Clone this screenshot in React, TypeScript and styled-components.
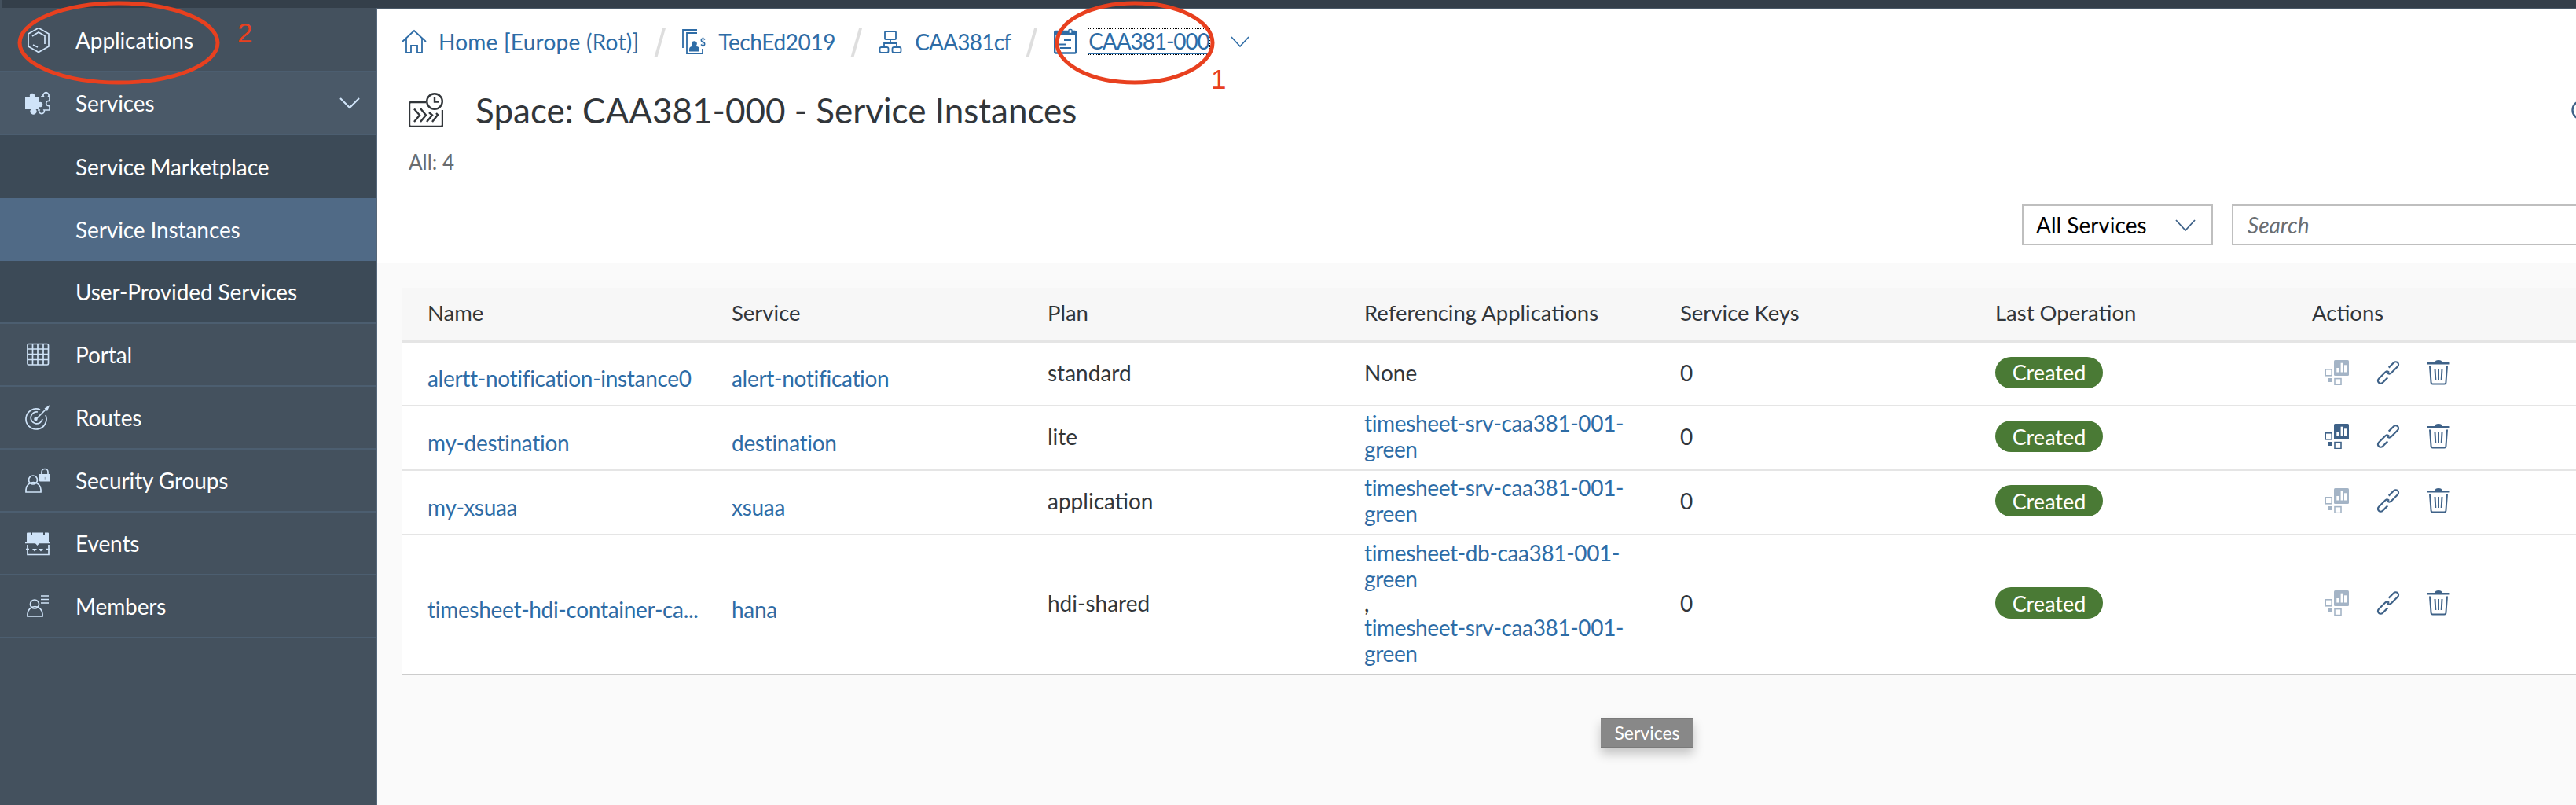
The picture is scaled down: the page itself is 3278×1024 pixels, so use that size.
import React from "react";
import styled, { createGlobalStyle } from "styled-components";

const FONT = `"Lato", "Liberation Sans", sans-serif`;
const LINK = "#2e6ca6";
const ICON = "#cfe3f8";
const ACTION = "#3f6288";
const RED = "#e8401f";

const Global = createGlobalStyle`
  html, body { margin: 0; padding: 0; background: #fafafa; }
  body { font-family: ${FONT}; }
  * { box-sizing: border-box; }
`;

const Page = styled.div`
  position: relative; width: 3278px; height: 1024px; overflow: hidden;
  display: flex; flex-direction: column; background: #fafafa;
`;
const TopBar = styled.div`
  height: 10px; flex: none; background: #343f4a; border-left: 2px solid #44515e;
`;
const Body = styled.div`display: flex; flex: 1; min-height: 0;`;

const Sidebar = styled.nav`
  width: 480px; flex: none; background: #44515e; border-right: 2px solid #55677a;
  display: flex; flex-direction: column;
`;
const NavRow = styled.div<{ $kind?: "first" | "open" | "sub" | "selected" }>`
  height: ${p => (p.$kind === "first" ? 82 : 80)}px;
  padding-top: ${p => (p.$kind === "first" ? 2 : 0)}px;
  flex: none; display: flex; align-items: center; padding-left: 32px; padding-right: 20px;
  color: #fff; font-size: 28px; letter-spacing: -0.1px;
  background: ${p =>
    p.$kind === "sub" ? "#3c4a57" : p.$kind === "selected" ? "#506a86" : p.$kind === "open" ? "#4a5968" : "#44515e"};
  border-bottom: ${p => (p.$kind === "sub" || p.$kind === "selected" ? "none" : "2px solid #4c5e70")};
`;
const LastSub = styled(NavRow)`height: 80px; border-bottom: 2px solid #4c5e70;`;
const NavIcon = styled.svg`
  width: 32px; height: 32px; flex: none; margin-right: 32px;
  fill: none; stroke: ${ICON}; stroke-width: 1.7;
`;
const NavIndent = styled.span`width: 64px; flex: none;`;
const NavChevron = styled.svg`
  width: 26px; height: 16px; margin-left: auto; fill: none; stroke: ${ICON}; stroke-width: 2.2;
`;

const Main = styled.main`
  flex: 1; min-width: 0; border-top: 2px solid #4a5968; display: flex; flex-direction: column;
`;
const Head = styled.header`background: #fff; padding: 0 0 22px 32px; flex: none; height: 322px;`;
const Crumbs = styled.div`
  margin-top: 21px; height: 40px; display: flex; align-items: center; font-size: 28px; color: ${LINK};
`;
const CrumbIcon = styled.svg`
  width: 30px; height: 32px; flex: none; margin-right: 16px;
  fill: none; stroke: ${LINK}; stroke-width: 1.8; overflow: visible;
`;
const Slash = styled.span`
  width: 4px; height: 37px; margin: 0 26px 0 25px; flex: none; background: #dedede; transform: skewX(-16deg);
`;
const Crumb = styled.span<{ $spacing?: number }>`
  white-space: nowrap; letter-spacing: ${p => p.$spacing ?? 0}px;
`;
const CurrentCrumb = styled(Crumb)`
  outline: 1px dotted #000; border-bottom: 2px solid ${LINK}; line-height: 29px; padding-top: 1px; margin-left: -2px;
`;
const CrumbChevron = styled.svg`
  width: 24px; height: 14px; margin-left: 27px; fill: none; stroke: ${LINK}; stroke-width: 1.6;
`;
const TitleRow = styled.div`
  margin-top: 37px; padding-left: 8px; height: 60px; display: flex; align-items: center;
`;
const TitleIcon = styled.svg`
  width: 44px; height: 44px; flex: none; margin-right: 41px;
  fill: none; stroke: #32363a; stroke-width: 2.4;
`;
const Title = styled.h1`
  margin: 0; font-size: 44px; font-weight: 400; color: #32363a; white-space: nowrap;
`;
const HelpIcon = styled.svg`
  width: 26px; height: 26px; flex: none; margin-left: auto; margin-right: -20px;
  fill: none; stroke: ${ACTION}; stroke-width: 2.4;
`;
const Count = styled.div`
  margin-top: 20px; padding-left: 8px; height: 32px; line-height: 32px; font-size: 26px; color: #6a6d70;
`;
const Filters = styled.div`
  margin-top: 38px; height: 52px; display: flex; gap: 24px; justify-content: flex-end; margin-right: -8px;
`;
const Select = styled.div`
  width: 243px; height: 52px; border: 2px solid #bfbfbf; background: #fff;
  display: flex; align-items: center; padding: 0 20px 0 16px; font-size: 28px; color: #000;
`;
const SelectChevron = styled.svg`
  width: 26px; height: 15px; margin-left: auto; fill: none; stroke: ${ACTION}; stroke-width: 1.8;
`;
const Search = styled.div`
  width: 446px; height: 52px; border: 2px solid #bfbfbf; background: #fff;
  display: flex; align-items: center; padding-left: 18px;
  font-size: 28px; font-style: italic; color: #6a6d70;
`;

const Content = styled.section`flex: 1; background: #fafafa; padding: 32px 0 0 32px;`;
const Table = styled.table`
  width: 2766px; table-layout: fixed; border-collapse: collapse; font-size: 28px; color: #32363a;
`;
const HeadCell = styled.th`
  height: 68px; padding: 0 0 4px 32px; text-align: left; font-weight: 400; font-size: 27.5px;
  background: #f7f7f7; border-bottom: 4px solid #e5e5e5; color: #32363a;
`;
const Row = styled.tr<{ $last?: boolean }>`
  background: #fff;
  border-bottom: 2px solid ${p => (p.$last ? "#cccccc" : "#e5e5e5")};
`;
const Cell = styled.td<{ $h?: number }>`
  height: ${p => p.$h ?? 82}px; padding: 0 0 4px 32px; white-space: nowrap; vertical-align: middle;
`;
const LinkCell = styled(Cell)`padding-top: 15px; color: ${LINK}; letter-spacing: -0.3px;`;
const RefLink = styled.span`
  display: block; line-height: 33px; color: ${LINK}; white-space: normal; letter-spacing: -0.35px;
`;
const Comma = styled.span`display: block; line-height: 29px; color: #32363a;`;
const Badge = styled.span`
  display: inline-flex; width: 137px; height: 40px; align-items: center; justify-content: center;
  border-radius: 20px; background: #4a7a35; color: #fff; font-size: 27px;
`;
const Actions = styled.div`display: flex; align-items: center; padding-left: 16px;`;
const ChartIcon = styled.svg<{ $off?: boolean }>`
  width: 32px; height: 32px; flex: none; opacity: ${p => (p.$off ? 0.47 : 1)};
`;
const ChainIcon = styled.svg`
  width: 28px; height: 28px; flex: none; margin-left: 35px; fill: none; stroke: ${ACTION}; stroke-width: 2.2;
  overflow: visible;
`;
const BinIcon = styled.svg`
  width: 30px; height: 32px; flex: none; margin-left: 35px;
`;

const Tooltip = styled.div`
  position: absolute; left: 2037px; top: 913px; width: 118px; height: 38px;
  background: #888; color: #fff; font-size: 23px; display: flex; align-items: center; justify-content: center;
  border-top: 1px solid #7a7a7a; border-bottom: 1px solid #7a7a7a;
  box-shadow: 0 8px 14px rgba(0,0,0,0.22);
`;
const Ring = styled.svg`
  position: absolute; fill: none; stroke: ${RED}; stroke-width: 5; overflow: visible;
`;
const MarkNumber = styled.span<{ $x: number }>`
  position: absolute; left: ${p => p.$x}px; top: 24px; font-family: "Liberation Sans", sans-serif;
  font-size: 35px; line-height: 1; color: ${RED};
`;
const MarkOne = styled(MarkNumber)`top: 83px;`;

const Chart = ({ off }: { off?: boolean }) => (
  <ChartIcon $off={off} viewBox="0 0 32 32">
    <rect x="12" y="0" width="19" height="20" rx="1.5" fill={ACTION} />
    <rect x="15.3" y="10" width="2.8" height="5.5" fill="#fff" />
    <rect x="20.6" y="3.7" width="2.6" height="11.8" fill="#fff" />
    <rect x="25" y="6.3" width="3" height="9.2" fill="#fff" />
    <rect x="1.2" y="11.8" width="8" height="8" fill="none" stroke={ACTION} strokeWidth="1.6" />
    <rect x="4" y="23" width="5.6" height="5" fill={ACTION} />
    <rect x="13" y="23.6" width="8" height="8" fill="none" stroke={ACTION} strokeWidth="1.6" />
  </ChartIcon>
);
const Chain = () => (
  <ChainIcon viewBox="0 0 28 28">
    <g transform="rotate(-45 14 14)">
      <path d="M9 18H0a3.500 3.500 0 0 1 0-7H12a3.500 3.500 0 0 1 3 3.500" />
      <path d="M19 10H28a3.500 3.500 0 0 1 0 7H16a3.500 3.500 0 0 1-3-3.500" />
    </g>
  </ChainIcon>
);
const Bin = () => (
  <BinIcon viewBox="0 0 30 32">
    <path d="M10.5 3a4.5 3 0 0 1 9 0z" fill={ACTION} />
    <rect x="0.5" y="3" width="29" height="2.6" rx="0.6" fill={ACTION} />
    <path d="M4 7.5 5.6 29a2 2 0 0 0 2 1.6h14.8a2 2 0 0 0 2-1.6L26 7.5M10.5 11l.8 14M15 11v14M19.5 11l-.8 14" fill="none" stroke={ACTION} strokeWidth="2" />
  </BinIcon>
);
const ActionSet = ({ off = true }: { off?: boolean }) => (
  <Actions><Chart off={off} /><Chain /><Bin /></Actions>
);

const App = () => (
  <Page>
    <Global />
    <TopBar />
    <Body>
      <Sidebar>
        <NavRow $kind="first">
          <NavIcon viewBox="0 0 32 32">
            <path d="M17 0.5 30 8V24L17 31.5 4 24V8z" />
            <path d="M9 11 17 6l8 4.5V21M10 22l6 3" />
          </NavIcon>
          Applications
        </NavRow>
        <NavRow $kind="open">
          <NavIcon viewBox="0 0 32 32">
            <path d="M0 8h6a3.2 3.2 0 1 1 6 0h6v7a3.2 3.2 0 1 1 0 6v3h-4.500a4 4 0 1 1-6 0H0z" fill={ICON} stroke="none" />
            <path d="M20 8h3.500a3.500 3.500 0 1 1 6 0H31v5.500a3.200 3.200 0 1 0 0 6V25h-7a3.300 3.300 0 1 1-6 0h-2" />
          </NavIcon>
          Services
          <NavChevron viewBox="0 0 26 16"><path d="M1 2 13 14 25 2" /></NavChevron>
        </NavRow>
        <NavRow $kind="sub"><NavIndent />Service Marketplace</NavRow>
        <NavRow $kind="selected"><NavIndent />Service Instances</NavRow>
        <LastSub $kind="sub"><NavIndent />User-Provided Services</LastSub>
        <NavRow>
          <NavIcon viewBox="0 0 32 32">
            <rect x="3" y="2.500" width="26.500" height="26.500" rx="1.500" />
            <path d="M3 9h26.500M3 15.500h26.500M3 22.500h26.500M9.500 2.500V29M16 2.500V29M23 2.500V29" />
          </NavIcon>
          Portal
        </NavRow>
        <NavRow>
          <NavIcon viewBox="0 0 32 32">
            <path d="M26 13a13 13 0 1 1-7-7M22 18a7.500 7.500 0 1 1-6-9" />
            <circle cx="13.500" cy="18" r="2.300" fill={ICON} stroke="none" />
            <path d="M14 18 27 5" />
            <path d="M24.500 4.500 31.500 0 28 8z" fill={ICON} stroke="none" />
          </NavIcon>
          Routes
        </NavRow>
        <NavRow>
          <NavIcon viewBox="0 0 32 32">
            <circle cx="10" cy="15.500" r="5.500" />
            <path d="M1 31v-3a9 9 0 0 1 19 0v3z" />
            <path d="M21 8V5.500a4 4 0 0 1 8 0V8" />
            <path d="M18 8h14v8.500a1 1 0 0 1-1 1H19a1 1 0 0 1-1-1z" fill={ICON} stroke="none" />
            <rect x="24" y="11" width="2.200" height="4.500" fill="#44515e" />
          </NavIcon>
          Security Groups
        </NavRow>
        <NavRow>
          <NavIcon viewBox="0 0 32 32">
            <path d="M3 2.500h26a1 1 0 0 1 1 1V14H2V3.500a1 1 0 0 1 1-1z" fill={ICON} stroke="none" />
            <path d="M8 0v5M24 0v5" stroke="#44515e" strokeWidth="2" />
            <path d="M0 15.500h31M3 18v12.500h27V18M1 23.500h4M27 23.500h5" />
            <path d="M11 14h9l-4.500 5zM9 23h6l-3 3.500zM17 23h6l-3 3.500z" fill={ICON} stroke="none" />
          </NavIcon>
          Events
        </NavRow>
        <NavRow>
          <NavIcon viewBox="0 0 32 32">
            <circle cx="12" cy="13.500" r="5.500" />
            <path d="M3 29v-3a9.500 9.500 0 0 1 19 0v3zM20 3h10M20 7.500h10M20 12h10" />
          </NavIcon>
          Members
        </NavRow>
      </Sidebar>
      <Main>
        <Head>
          <Crumbs>
            <CrumbIcon viewBox="0 0 30 32">
              <path d="M0 16 15 2l15 14M5 13v17h6v-9h8v9h6V13" />
            </CrumbIcon>
            <Crumb $spacing={0.25}>Home [Europe (Rot)]</Crumb>
            <Slash />
            <CrumbIcon viewBox="0 0 30 32">
              <path d="M1 24V1h18" />
              <path d="M26 25v6H6V5h13" />
              <circle cx="15.500" cy="18.500" r="3.300" fill={LINK} stroke="none" />
              <path d="M9 28.500v-2.500a4 4 0 0 1 4-4h5a4 4 0 0 1 4 4v2.500z" fill={LINK} stroke="none" />
              <path d="M29 13.500q-1-1.500-2.500-1.500c-3 0-3 4 0 4.500s3 4.500 0 4.500q-1.500 0-2.500-1.500M26.500 10.500v12" strokeWidth="1.400" />
            </CrumbIcon>
            <Crumb $spacing={-0.4}>TechEd2019</Crumb>
            <Slash />
            <CrumbIcon viewBox="0 0 30 32">
              <rect x="8" y="3" width="14" height="10" rx="1" />
              <rect x="1.500" y="23" width="11" height="7" rx="2" />
              <rect x="17.500" y="23" width="11" height="7" rx="2" />
              <path d="M15 13v5M7 23v-5h16v5" />
            </CrumbIcon>
            <Crumb $spacing={-0.8}>CAA381cf</Crumb>
            <Slash />
            <CrumbIcon viewBox="0 0 30 32">
              <rect x="1.200" y="3" width="27" height="27.500" rx="1.500" strokeWidth="2.400" />
              <rect x="1.200" y="2.500" width="27" height="5" fill={LINK} strokeWidth="1" />
              <rect x="19" y="0.500" width="4" height="5" rx="1" fill="#fff" strokeWidth="1.400" />
              <path d="M13 14h9M6 19.500h10M8 24h14" strokeWidth="2" />
            </CrumbIcon>
            <CurrentCrumb $spacing={-1.1}>CAA381-000</CurrentCrumb>
            <CrumbChevron viewBox="0 0 24 14"><path d="M1 1 12 13 23 1" /></CrumbChevron>
          </Crumbs>
          <TitleRow>
            <TitleIcon viewBox="0 0 44 44">
              <path d="M22 12H3a2 2 0 0 0-2 2v27a2 2 0 0 0 2 2h38a2 2 0 0 0 2-2V22" />
              <circle cx="33" cy="11" r="9.800" />
              <path d="M33 5v6.500h5.500" />
              <path d="M7 20.500l7 8-7 8.500M15 20l7 8.500-7 8.500M26 25l4 3.500-7 8.500M35 26l2 2-7 9" />
            </TitleIcon>
            <Title>Space: CAA381-000 - Service Instances</Title>
            <HelpIcon viewBox="0 0 26 26">
              <circle cx="13" cy="13" r="11.500" />
              <circle cx="13" cy="13" r="6" strokeWidth="1.600" />
            </HelpIcon>
          </TitleRow>
          <Count>All: 4</Count>
          <Filters>
            <Select>
              All Services
              <SelectChevron viewBox="0 0 26 15"><path d="M1 1 13 14 25 1" /></SelectChevron>
            </Select>
            <Search>Search</Search>
          </Filters>
        </Head>
        <Content>
          <Table>
            <colgroup>
              <col width="387" />
              <col width="402" />
              <col width="403" />
              <col width="402" />
              <col width="401" />
              <col width="403" />
              <col />
            </colgroup>
            <thead>
              <tr>
                <HeadCell>Name</HeadCell>
                <HeadCell>Service</HeadCell>
                <HeadCell>Plan</HeadCell>
                <HeadCell>Referencing Applications</HeadCell>
                <HeadCell>Service Keys</HeadCell>
                <HeadCell>Last Operation</HeadCell>
                <HeadCell>Actions</HeadCell>
              </tr>
            </thead>
            <tbody>
              <Row>
                <LinkCell>alertt-notification-instance0</LinkCell>
                <LinkCell>alert-notification</LinkCell>
                <Cell>standard</Cell>
                <Cell>None</Cell>
                <Cell>0</Cell>
                <Cell><Badge>Created</Badge></Cell>
                <Cell><ActionSet /></Cell>
              </Row>
              <Row>
                <LinkCell>my-destination</LinkCell>
                <LinkCell>destination</LinkCell>
                <Cell>lite</Cell>
                <Cell><RefLink>timesheet-srv-caa381-001-green</RefLink></Cell>
                <Cell>0</Cell>
                <Cell><Badge>Created</Badge></Cell>
                <Cell><ActionSet off={false} /></Cell>
              </Row>
              <Row>
                <LinkCell>my-xsuaa</LinkCell>
                <LinkCell>xsuaa</LinkCell>
                <Cell>application</Cell>
                <Cell><RefLink>timesheet-srv-caa381-001-green</RefLink></Cell>
                <Cell>0</Cell>
                <Cell><Badge>Created</Badge></Cell>
                <Cell><ActionSet /></Cell>
              </Row>
              <Row $last>
                <LinkCell $h={178}>timesheet-hdi-container-ca...</LinkCell>
                <LinkCell $h={178}>hana</LinkCell>
                <Cell $h={178}>hdi-shared</Cell>
                <Cell $h={178}>
                  <RefLink>timesheet-db-caa381-001-green</RefLink>
                  <Comma>,</Comma>
                  <RefLink>timesheet-srv-caa381-001-green</RefLink>
                </Cell>
                <Cell $h={178}>0</Cell>
                <Cell $h={178}><Badge>Created</Badge></Cell>
                <Cell $h={178}><ActionSet /></Cell>
              </Row>
            </tbody>
          </Table>
        </Content>
      </Main>
    </Body>
    <Tooltip>Services</Tooltip>
    <Ring style={{ left: 23, top: 2 }} width="256" height="105" viewBox="0 0 256 105">
      <ellipse cx="128" cy="52.500" rx="126" ry="50.500" />
    </Ring>
    <MarkNumber $x={302}>2</MarkNumber>
    <Ring style={{ left: 1343, top: 2 }} width="202" height="105" viewBox="0 0 202 105">
      <ellipse cx="101" cy="52.500" rx="99" ry="50.500" />
    </Ring>
    <MarkOne $x={1541}>1</MarkOne>
  </Page>
);

export default App;
